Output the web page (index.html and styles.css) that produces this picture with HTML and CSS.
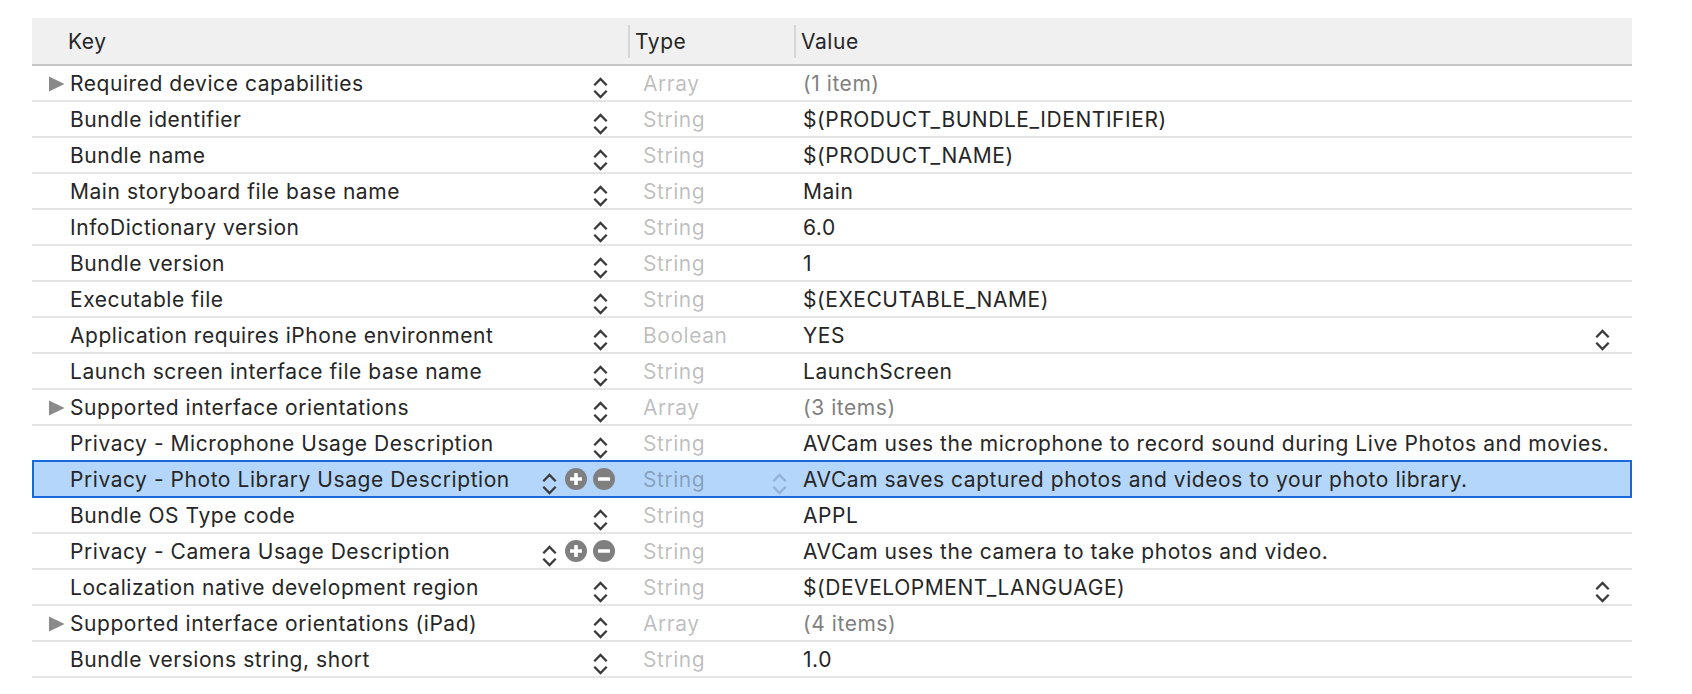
FILE: index.html
```html
<!DOCTYPE html>
<html>
<head>
<meta charset="utf-8">
<link rel="stylesheet" href="styles.css">
</head>
<body>
<div class="plist">
  <div class="head">
    <div class="hcell hkey">Key</div>
    <div class="hcell"><span class="sep"></span><span class="htext">Type</span></div>
    <div class="hcell"><span class="sep"></span><span class="htext">Value</span></div>
  </div>

  <div class="row">
    <div class="kcell"><svg class="tri" viewBox="0 0 17 16"><polygon points="1,0.5 16.5,8 1,15.5"/></svg><span class="klabel">Required device capabilities</span><svg class="step" viewBox="0 0 15 22"><path d="M1.3 8.2 L7.5 2 L13.7 8.2 M1.3 13.8 L7.5 20 L13.7 13.8"/></svg></div>
    <div class="tcell"><span class="ttext">Array</span></div>
    <div class="vcell"><span class="vtext dim">(1 item)</span></div>
  </div>

  <div class="row">
    <div class="kcell"><span class="tri none"></span><span class="klabel">Bundle identifier</span><svg class="step" viewBox="0 0 15 22"><path d="M1.3 8.2 L7.5 2 L13.7 8.2 M1.3 13.8 L7.5 20 L13.7 13.8"/></svg></div>
    <div class="tcell"><span class="ttext">String</span></div>
    <div class="vcell"><span class="vtext">$(PRODUCT_BUNDLE_IDENTIFIER)</span></div>
  </div>

  <div class="row">
    <div class="kcell"><span class="tri none"></span><span class="klabel">Bundle name</span><svg class="step" viewBox="0 0 15 22"><path d="M1.3 8.2 L7.5 2 L13.7 8.2 M1.3 13.8 L7.5 20 L13.7 13.8"/></svg></div>
    <div class="tcell"><span class="ttext">String</span></div>
    <div class="vcell"><span class="vtext">$(PRODUCT_NAME)</span></div>
  </div>

  <div class="row">
    <div class="kcell"><span class="tri none"></span><span class="klabel">Main storyboard file base name</span><svg class="step" viewBox="0 0 15 22"><path d="M1.3 8.2 L7.5 2 L13.7 8.2 M1.3 13.8 L7.5 20 L13.7 13.8"/></svg></div>
    <div class="tcell"><span class="ttext">String</span></div>
    <div class="vcell"><span class="vtext">Main</span></div>
  </div>

  <div class="row">
    <div class="kcell"><span class="tri none"></span><span class="klabel">InfoDictionary version</span><svg class="step" viewBox="0 0 15 22"><path d="M1.3 8.2 L7.5 2 L13.7 8.2 M1.3 13.8 L7.5 20 L13.7 13.8"/></svg></div>
    <div class="tcell"><span class="ttext">String</span></div>
    <div class="vcell"><span class="vtext">6.0</span></div>
  </div>

  <div class="row">
    <div class="kcell"><span class="tri none"></span><span class="klabel">Bundle version</span><svg class="step" viewBox="0 0 15 22"><path d="M1.3 8.2 L7.5 2 L13.7 8.2 M1.3 13.8 L7.5 20 L13.7 13.8"/></svg></div>
    <div class="tcell"><span class="ttext">String</span></div>
    <div class="vcell"><span class="vtext">1</span></div>
  </div>

  <div class="row">
    <div class="kcell"><span class="tri none"></span><span class="klabel">Executable file</span><svg class="step" viewBox="0 0 15 22"><path d="M1.3 8.2 L7.5 2 L13.7 8.2 M1.3 13.8 L7.5 20 L13.7 13.8"/></svg></div>
    <div class="tcell"><span class="ttext">String</span></div>
    <div class="vcell"><span class="vtext">$(EXECUTABLE_NAME)</span></div>
  </div>

  <div class="row">
    <div class="kcell"><span class="tri none"></span><span class="klabel">Application requires iPhone environment</span><svg class="step" viewBox="0 0 15 22"><path d="M1.3 8.2 L7.5 2 L13.7 8.2 M1.3 13.8 L7.5 20 L13.7 13.8"/></svg></div>
    <div class="tcell"><span class="ttext">Boolean</span></div>
    <div class="vcell"><span class="vtext">YES</span><svg class="step vstep" viewBox="0 0 15 22"><path d="M1.3 8.2 L7.5 2 L13.7 8.2 M1.3 13.8 L7.5 20 L13.7 13.8"/></svg></div>
  </div>

  <div class="row">
    <div class="kcell"><span class="tri none"></span><span class="klabel">Launch screen interface file base name</span><svg class="step" viewBox="0 0 15 22"><path d="M1.3 8.2 L7.5 2 L13.7 8.2 M1.3 13.8 L7.5 20 L13.7 13.8"/></svg></div>
    <div class="tcell"><span class="ttext">String</span></div>
    <div class="vcell"><span class="vtext">LaunchScreen</span></div>
  </div>

  <div class="row">
    <div class="kcell"><svg class="tri" viewBox="0 0 17 16"><polygon points="1,0.5 16.5,8 1,15.5"/></svg><span class="klabel">Supported interface orientations</span><svg class="step" viewBox="0 0 15 22"><path d="M1.3 8.2 L7.5 2 L13.7 8.2 M1.3 13.8 L7.5 20 L13.7 13.8"/></svg></div>
    <div class="tcell"><span class="ttext">Array</span></div>
    <div class="vcell"><span class="vtext dim">(3 items)</span></div>
  </div>

  <div class="row">
    <div class="kcell"><span class="tri none"></span><span class="klabel">Privacy - Microphone Usage Description</span><svg class="step" viewBox="0 0 15 22"><path d="M1.3 8.2 L7.5 2 L13.7 8.2 M1.3 13.8 L7.5 20 L13.7 13.8"/></svg></div>
    <div class="tcell"><span class="ttext">String</span></div>
    <div class="vcell"><span class="vtext">AVCam uses the microphone to record sound during Live Photos and movies.</span></div>
  </div>

  <div class="row selected">
    <div class="kcell"><span class="tri none"></span><span class="klabel">Privacy - Photo Library Usage Description</span><span class="ctl"><svg class="step" viewBox="0 0 15 22"><path d="M1.3 8.2 L7.5 2 L13.7 8.2 M1.3 13.8 L7.5 20 L13.7 13.8"/></svg><svg class="circ plus" viewBox="0 0 22 22"><circle cx="11" cy="11" r="11"/><rect x="5" y="9.2" width="12" height="3.6" rx="0.6"/><rect x="9.2" y="5" width="3.6" height="12" rx="0.6"/></svg><svg class="circ minus" viewBox="0 0 22 22"><circle cx="11" cy="11" r="11"/><rect x="5" y="9.2" width="12" height="3.6" rx="0.6"/></svg></span></div>
    <div class="tcell"><span class="ttext">String</span><svg class="step tstep" viewBox="0 0 15 22"><path d="M1.3 8.2 L7.5 2 L13.7 8.2 M1.3 13.8 L7.5 20 L13.7 13.8"/></svg></div>
    <div class="vcell"><span class="vtext">AVCam saves captured photos and videos to your photo library.</span></div>
  </div>

  <div class="row">
    <div class="kcell"><span class="tri none"></span><span class="klabel">Bundle OS Type code</span><svg class="step" viewBox="0 0 15 22"><path d="M1.3 8.2 L7.5 2 L13.7 8.2 M1.3 13.8 L7.5 20 L13.7 13.8"/></svg></div>
    <div class="tcell"><span class="ttext">String</span></div>
    <div class="vcell"><span class="vtext">APPL</span></div>
  </div>

  <div class="row">
    <div class="kcell"><span class="tri none"></span><span class="klabel">Privacy - Camera Usage Description</span><span class="ctl"><svg class="step" viewBox="0 0 15 22"><path d="M1.3 8.2 L7.5 2 L13.7 8.2 M1.3 13.8 L7.5 20 L13.7 13.8"/></svg><svg class="circ plus" viewBox="0 0 22 22"><circle cx="11" cy="11" r="11"/><rect x="5" y="9.2" width="12" height="3.6" rx="0.6"/><rect x="9.2" y="5" width="3.6" height="12" rx="0.6"/></svg><svg class="circ minus" viewBox="0 0 22 22"><circle cx="11" cy="11" r="11"/><rect x="5" y="9.2" width="12" height="3.6" rx="0.6"/></svg></span></div>
    <div class="tcell"><span class="ttext">String</span></div>
    <div class="vcell"><span class="vtext">AVCam uses the camera to take photos and video.</span></div>
  </div>

  <div class="row">
    <div class="kcell"><span class="tri none"></span><span class="klabel">Localization native development region</span><svg class="step" viewBox="0 0 15 22"><path d="M1.3 8.2 L7.5 2 L13.7 8.2 M1.3 13.8 L7.5 20 L13.7 13.8"/></svg></div>
    <div class="tcell"><span class="ttext">String</span></div>
    <div class="vcell"><span class="vtext">$(DEVELOPMENT_LANGUAGE)</span><svg class="step vstep" viewBox="0 0 15 22"><path d="M1.3 8.2 L7.5 2 L13.7 8.2 M1.3 13.8 L7.5 20 L13.7 13.8"/></svg></div>
  </div>

  <div class="row">
    <div class="kcell"><svg class="tri" viewBox="0 0 17 16"><polygon points="1,0.5 16.5,8 1,15.5"/></svg><span class="klabel">Supported interface orientations (iPad)</span><svg class="step" viewBox="0 0 15 22"><path d="M1.3 8.2 L7.5 2 L13.7 8.2 M1.3 13.8 L7.5 20 L13.7 13.8"/></svg></div>
    <div class="tcell"><span class="ttext">Array</span></div>
    <div class="vcell"><span class="vtext dim">(4 items)</span></div>
  </div>

  <div class="row">
    <div class="kcell"><span class="tri none"></span><span class="klabel">Bundle versions string, short</span><svg class="step" viewBox="0 0 15 22"><path d="M1.3 8.2 L7.5 2 L13.7 8.2 M1.3 13.8 L7.5 20 L13.7 13.8"/></svg></div>
    <div class="tcell"><span class="ttext">String</span></div>
    <div class="vcell"><span class="vtext">1.0</span></div>
  </div>
</div>
</body>
</html>
```
FILE: styles.css
```css
* { box-sizing: border-box; }
html, body { margin: 0; padding: 0; background: #ffffff; }
body {
  font-family: "Inter", "Noto Sans", "Liberation Sans", sans-serif;
  font-size: 21px;
  letter-spacing: 0.55px;
  color: #262626;
}
.plist {
  margin: 18px 0 0 32px;
  width: 1600px;
}
.head {
  display: grid;
  grid-template-columns: 597px 166px 837px;
  height: 48px;
  background: #f0f0f0;
  border-bottom: 2px solid #c6c6c6;
}
.hcell {
  display: flex;
  align-items: center;
  white-space: nowrap;
}
.hkey { padding-left: 36px; }
.sep {
  width: 2px;
  height: 33px;
  background: #d6d6d6;
  margin-left: -1px;
  margin-right: 5px;
}
.row {
  display: grid;
  grid-template-columns: 597px 166px 837px;
  height: 36px;
  border-bottom: 2px solid #e4e4e4;
}
.row.selected {
  background: #b4d6fb;
  border-bottom-color: #1b68dc;
  box-shadow: 0 -2px 0 #1b68dc, inset 2px 0 0 #1b68dc, inset -2px 0 0 #1b68dc;
}
.kcell, .tcell, .vcell {
  display: flex;
  align-items: center;
  white-space: nowrap;
  overflow: hidden;
}
.kcell { padding-left: 16px; }
.tcell { padding-left: 14px; }
.vcell { padding-left: 8px; }
.tri {
  width: 17px;
  height: 16px;
  margin-right: 5px;
  margin-top: 2px;
  flex: none;
  fill: #8a8a8a;
}
.tri.none { display: inline-block; }
.klabel, .ttext, .vtext { flex: 1; }
.ttext { color: rgba(0, 0, 0, 0.27); }
.vtext.dim { color: #808080; }
.step {
  width: 15px;
  height: 22px;
  flex: none;
  margin-top: 9px;
  fill: none;
  stroke: #3a3a3a;
  stroke-width: 2.3;
  stroke-linecap: butt;
  stroke-linejoin: miter;
}
.kcell > .step { margin-right: 21px; }
.ctl {
  display: flex;
  align-items: center;
  gap: 8px;
  margin-right: 14px;
  flex: none;
}
.ctl .circ.minus { margin-left: -2px; }
.circ {
  width: 22px;
  height: 22px;
  flex: none;
}
.circ circle { fill: #7f7f7f; }
.circ rect { fill: #ffffff; }
.tstep {
  margin-right: 8px;
  stroke: #93b1d6;
}
.vstep { margin-right: 22px; }
```
